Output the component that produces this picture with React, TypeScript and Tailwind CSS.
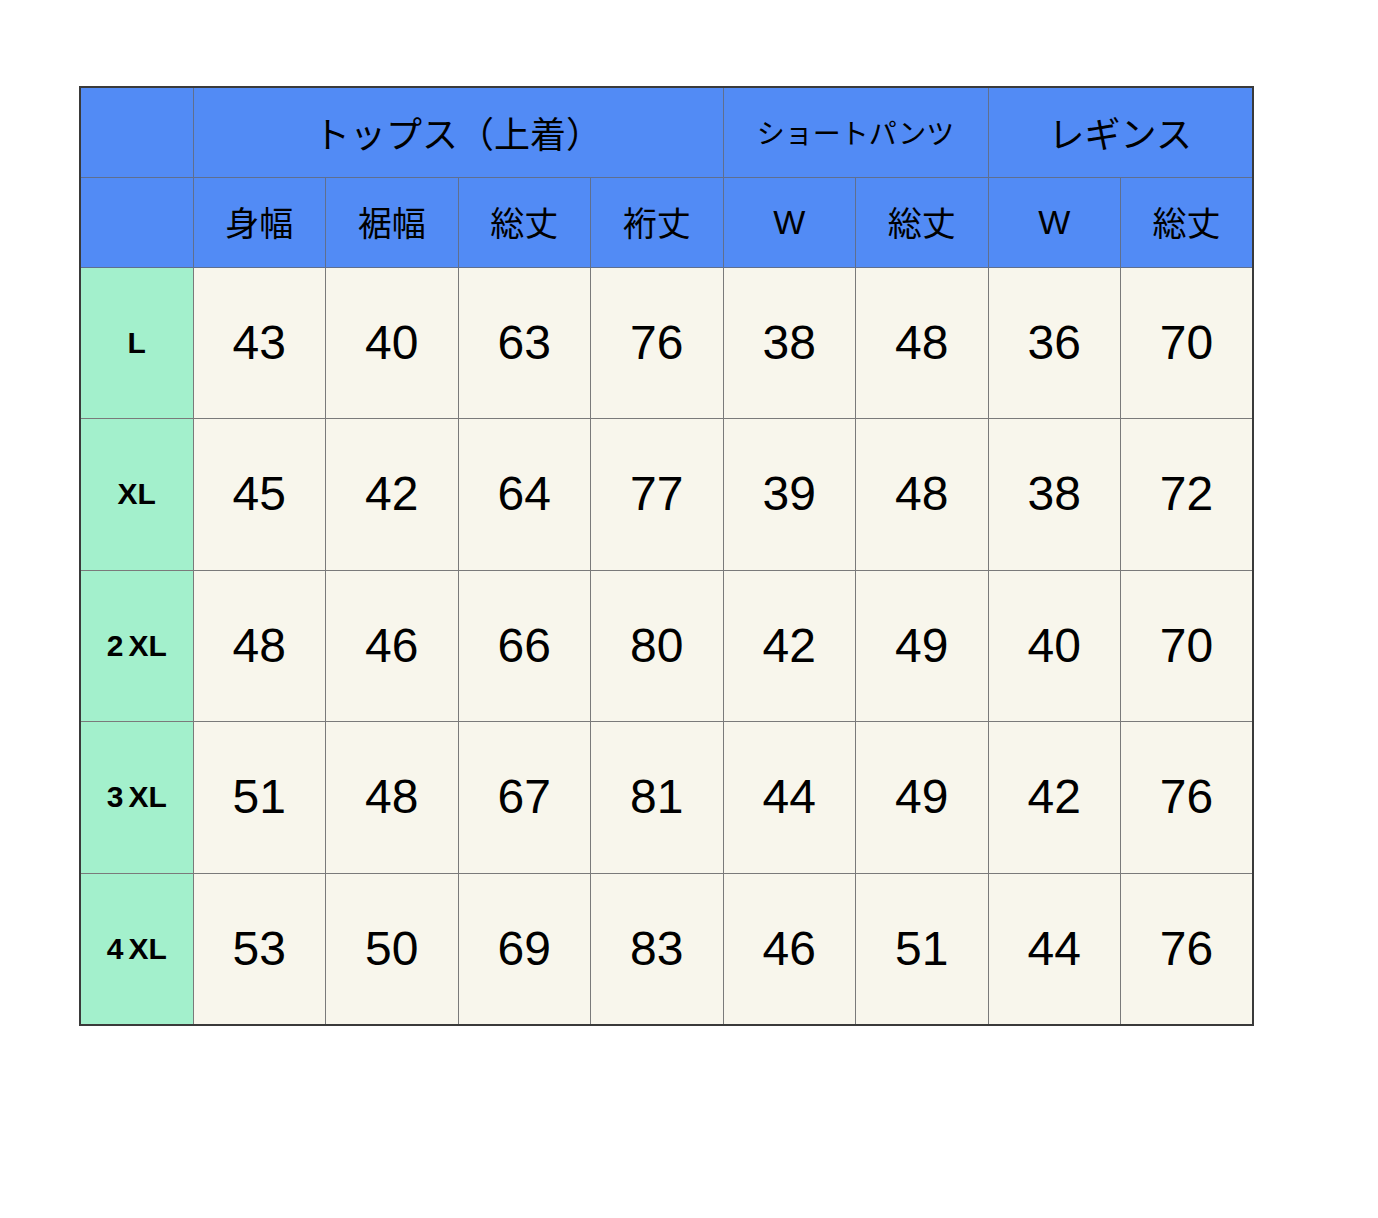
import React from "react";

const rows: [string, number[]][] = [
  ["L", [43, 40, 63, 76, 38, 48, 36, 70]],
  ["XL", [45, 42, 64, 77, 39, 48, 38, 72]],
  ["2XL", [48, 46, 66, 80, 42, 49, 40, 70]],
  ["3XL", [51, 48, 67, 81, 44, 49, 42, 76]],
  ["4XL", [53, 50, 69, 83, 46, 51, 44, 76]],
];

const sub = ["身幅", "裾幅", "総丈", "裄丈", "W", "総丈", "W", "総丈"];

const jp = { fontFamily: '"Noto Sans CJK JP", "Noto Sans", sans-serif' };
const num = { fontFamily: '"Liberation Sans", Arial, sans-serif' };

export default function App() {
  return (
    <div className="w-[1378px] h-[1218px] bg-white pt-[86px] pl-[79px]">
      <table
        className="table-fixed border-collapse w-[1175px] border-2 border-[#3a3a3a] text-black"
        style={jp}
      >
        <colgroup>
          <col className="w-[113px]" />
          {sub.map((_, i) => (
            <col key={i} />
          ))}
        </colgroup>
        <thead>
          <tr className="h-[90px] bg-[#528bf5]">
            <th className="border border-[#5f6f8f]"></th>
            <th colSpan={4} className="border border-[#5f6f8f] font-normal text-[36px] leading-none">
              トップス（上着）
            </th>
            <th colSpan={2} className="border border-[#5f6f8f] font-normal text-[28px] leading-none">
              ショートパンツ
            </th>
            <th colSpan={2} className="border border-[#5f6f8f] font-normal text-[36px] leading-none">
              レギンス
            </th>
          </tr>
          <tr className="h-[90px] bg-[#528bf5]">
            <th className="border border-[#5f6f8f]"></th>
            {sub.map((s, i) => (
              <th
                key={i}
                className={
                  s === "W"
                    ? "border border-[#5f6f8f] font-normal text-[34px] leading-none"
                    : "border border-[#5f6f8f] font-normal text-[34px] leading-none"
                }
                style={s === "W" ? num : undefined}
              >
                {s}
              </th>
            ))}
          </tr>
        </thead>
        <tbody>
          {rows.map(([size, vals]) => (
            <tr key={size} className="h-[151.5px]">
              <td
                className="border border-[#7a7a7a] bg-[#a3f0cc] text-center font-bold text-[30px] leading-none"
                style={num}
              >
                {size.length === 3 ? (
                  <>
                    <span className="mr-[5px]">{size[0]}</span>
                    <span>{size.slice(1)}</span>
                  </>
                ) : (
                  size
                )}
              </td>
              {vals.map((v, i) => (
                <td
                  key={i}
                  className="border border-[#7a7a7a] bg-[#f8f6ec] text-center text-[48px] leading-none"
                  style={num}
                >
                  {v}
                </td>
              ))}
            </tr>
          ))}
        </tbody>
      </table>
    </div>
  );
}
